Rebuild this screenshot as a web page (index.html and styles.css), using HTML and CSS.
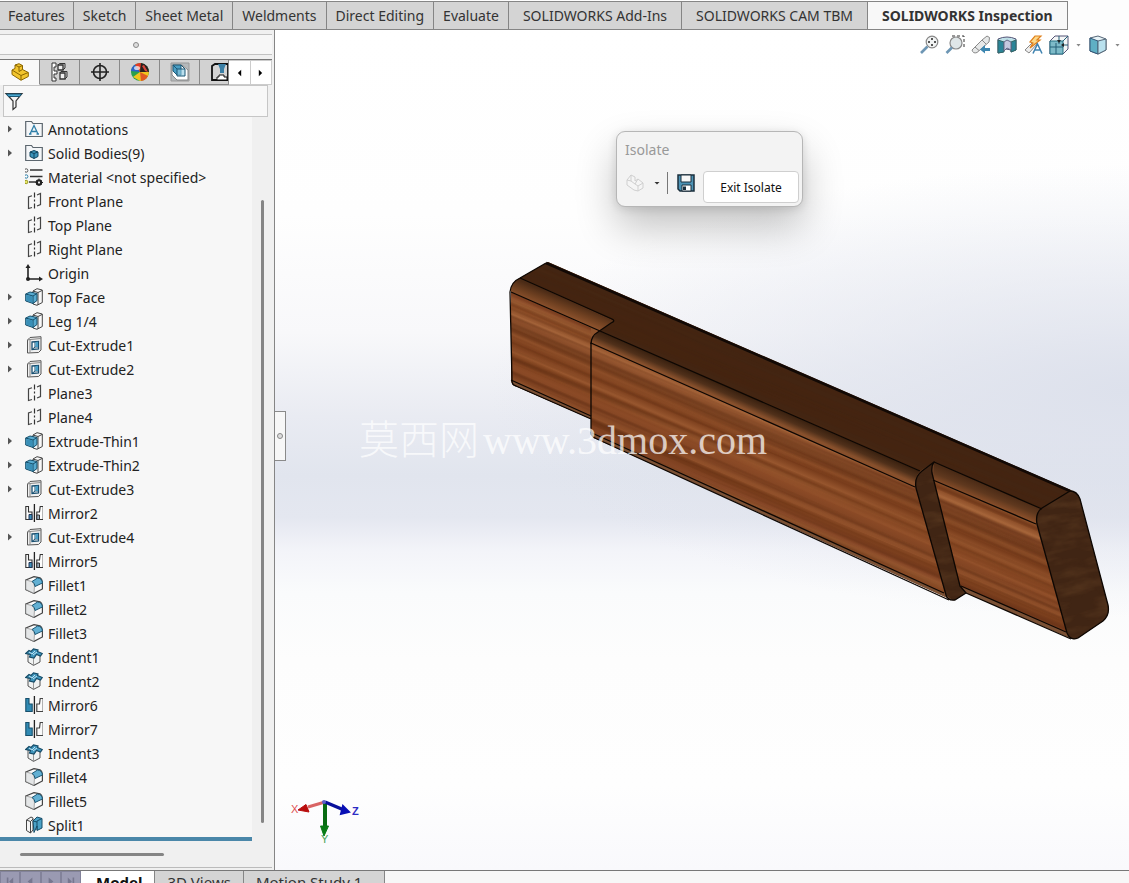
FILE: index.html
```html
<!DOCTYPE html>
<html lang="en">
<head>
<meta charset="utf-8">
<title>SOLIDWORKS</title>
<link rel="stylesheet" href="styles.css">
</head>
<body>
<svg class="defs" aria-hidden="true">
  <symbol id="arrow" viewBox="0 0 6 8"><path d="M1 0.5 5 4 1 7.5Z" fill="#555"/></symbol>
  <symbol id="annot" viewBox="0 0 18 18"><path d="M.7 16.500V1.500H6.500L8 3.500H17.300V16.500Z" fill="#f4f6f8" stroke="#5c666e" stroke-width="1.200"/><path d="M5 14 9 5.500 13 14M6.500 11.500H11.500M4 14H6.500M11.500 14H14" fill="none" stroke="#2f7fa8" stroke-width="1.300"/></symbol>
  <symbol id="bodies" viewBox="0 0 18 18"><path d="M.7 16.500V1.500H6.500L8 3.500H17.300V16.500Z" fill="#f4f6f8" stroke="#5c666e" stroke-width="1.200"/><path d="M5 8 9 6.500 13 8V12.500L9 14.500 5 12.500Z" fill="#3c94bb" stroke="#12455f"/><path d="M5 8 9 9.500 13 8M9 9.500V14.500" stroke="#12455f" fill="none"/></symbol>
  <symbol id="material" viewBox="0 0 18 18"><g fill="#fff" stroke-width="1"><circle cx="1.200" cy="2.500" r="1.700" stroke="#555"/><circle cx="1.200" cy="8.500" r="1.700" stroke="#2f7fa8"/><circle cx="1.200" cy="14" r="1.700" stroke="#9a9a20" fill="#e7e76a"/></g><path d="M5 2H17.500M5 8.500H17.500M4 14H11" stroke="#333" stroke-width="1.600"/><circle cx="14" cy="14.500" r="2.200" fill="none" stroke="#222" stroke-width="2"/><path d="M14 10.500V18M10.500 14.500H18M11.500 12 16.500 17M16.500 12 11.500 17" stroke="#222" stroke-width="1"/><circle cx="14" cy="14.500" r="1" fill="#fff"/></symbol>
  <symbol id="plane" viewBox="0 0 18 18"><path d="M7 3.800 3.500 5V16.500L7 15.500M12 3 15.500 1.500V12.500L12 14" fill="none" stroke="#444" stroke-width="1.200"/><path d="M9.500 .5V17.500" stroke="#333" stroke-width="1.200" stroke-dasharray="5 2 2 2"/></symbol>
  <symbol id="origin" viewBox="0 0 18 18"><path d="M3 4V15H14" fill="none" stroke="#222" stroke-width="1.600"/><path d="M.5 4 3 0 5.500 4ZM14 12.500 18 15 14 17.500Z" fill="#222"/><circle cx="3" cy="15" r="2" fill="#222"/></symbol>
  <symbol id="extrude" viewBox="0 0 18 18"><path d="M8 3 12 .7 17.300 2V14.500L12 17.300 8 16Z" fill="#f8f8f8" stroke="#444"/><path d="M13 4.500 17 2.500M13 4.500V17M8 3 13 4.500" stroke="#444" fill="none"/><path d="M.7 6 5 4 12 5.500V12.500L8 15.500.7 13Z" fill="#58abd0" stroke="#174f6b"/><path d="M.7 6 8 8 12 5.500M8 8V15.500" stroke="#174f6b" fill="none"/><path d="M1.500 7 7.500 8.500V14.500L1.500 12.500Z" fill="#398fb7"/></symbol>
  <symbol id="cut" viewBox="0 0 18 18"><path d="M2.500 4 5 1.500 16 .7V14L13.500 16.500 2.500 17Z" fill="#f0f0f0" stroke="#555"/><path d="M2.500 4 5 3.500 16 2.500M5 3.500V17" fill="none" stroke="#888"/><path d="M7 6 13.500 5.500V13L7 13.500Z" fill="#fff" stroke="#184f70" stroke-width="1.300"/><path d="M10 6V11L7 13.500M10 11H13" fill="none" stroke="#184f70"/><path d="M10.500 6 13 5.800V11H10.500Z" fill="#4aa0c8"/></symbol>
  <symbol id="mirror" viewBox="0 0 18 18"><path d="M.8 15.500V2.500H3.500V8H7V15.500ZM18.200 15.500V2.500H15.200L14.500 8H11.800V15.500Z" fill="#fdfdfd" stroke="#333" stroke-width="1.100"/><path d="M4 10.500H7V15.500H4Z" fill="#3c8fb8" stroke="#235"/><path d="M11.800 11H14.500V15.500H11.800Z" fill="#9ab" stroke="#333"/><path d="M9.400 0V18" stroke="#222" stroke-width="1.300"/></symbol>
  <symbol id="mirrorbody" viewBox="0 0 18 18"><path d="M.8 15.500V2.500H4V8H7.200V15.500Z" fill="#318ab3" stroke="#174f6b" stroke-width="1.100"/><path d="M18.200 15.500V2.500H15.200L14.500 8H11.800V15.500Z" fill="#fafafa" stroke="#444" stroke-width="1.200"/><path d="M9.400 0V18" stroke="#222" stroke-width="1.300"/></symbol>
  <symbol id="fillet" viewBox="0 0 18 18"><path d="M.8 4 9 .6 15 1.800Q17 3 17.400 6V13L9 17.400.8 13.500Z" fill="#fbfbfb" stroke="#444" stroke-width="1.200"/><path d="M.8 4 7 5.500Q9 7 9.500 10L9 17.400.8 13.500Z" fill="#e4e6e7" stroke="#777" stroke-width=".6"/><path d="M7 5.500 12.500 2Q17.300 2.500 17.400 7L10 10.500Q10 7 7 5.500Z" fill="#62b0d3" stroke="#1b5775"/></symbol>
  <symbol id="indent" viewBox="0 0 18 18"><path d="M3 6V14L8.500 17.400 15 14V6Z" fill="#f0f2f2" stroke="#555"/><path d="M8.500 9V17" stroke="#999"/><path d="M.7 5.500 4 2.500 6 3.500 8.500 .8 13 2 12.500 3.500 17.300 5.500 15.500 8 11.500 6.500 9 10 4.500 9 5.500 6.500Z" fill="#3f94bb" stroke="#164c68" stroke-width="1.200"/><path d="M4 4 7 6 10 3M8 7 12 4" fill="none" stroke="#bfe3f2"/></symbol>
  <symbol id="split" viewBox="0 0 18 18"><path d="M1.500 4 6 1 8 2V14L5.500 17 1.500 14.500Z" fill="#f4f4f4" stroke="#444"/><path d="M5.500 5.500V17M1.500 4 5.500 5.500 8 3" fill="none" stroke="#444"/><path d="M8 5 12 1 17 2.500V12L12 14.500V10L9 16.500Z" fill="#4ba1c6" stroke="#164c68"/><path d="M12 5 17 2.500M12 5V14M8 5 12 6" fill="none" stroke="#164c68"/></symbol>
  <symbol id="part" viewBox="0 0 18 18"><path d="M1 7 4 5.500V2L8 .7 11.500 2.500V6.500L17.300 9.500V13.500L10 17.300 1 11.500Z" fill="currentColor" stroke="#8a6500"/><path d="M1 7 10 12.500 17.300 9.500M10 12.500V17M4 2 8 4 11.500 2.500M8 4V8.500L11.500 6.500" fill="none" stroke="#8a6500"/></symbol>
</svg>
<div class="app">
  <nav class="ribbon" aria-label="Command tabs">
    <button class="rtab">Features</button><button class="rtab">Sketch</button><button class="rtab">Sheet Metal</button><button class="rtab">Weldments</button><button class="rtab">Direct Editing</button><button class="rtab">Evaluate</button><button class="rtab wide">SOLIDWORKS Add-Ins</button><button class="rtab wide">SOLIDWORKS CAM TBM</button><button class="rtab wide current">SOLIDWORKS Inspection</button>
  </nav>
  <main class="work">
    <aside class="panel">
      <div class="grip"><span class="dot"></span></div>
      <div class="managers">
        <button class="mtab current" aria-label="Feature tree"><svg class="i20 gold"><use href="#part"/></svg></button>
        <button class="mtab" aria-label="Properties"><svg class="i20" viewBox="0 0 20 20"><path d="M6 1H2V19H6V16H4V12H7V9H4V5H6Z" fill="#fff" stroke="#333"/><path d="M8 3H13V8H8ZM10 11H15V17H10Z" fill="#eee" stroke="#333" stroke-width="1.300"/><path d="M8 3 9.500 1.500H15V6L13 8M10 11 11 9.500H17V15L15 17" fill="none" stroke="#333"/></svg></button>
        <button class="mtab" aria-label="Dimensions"><svg class="i20" viewBox="0 0 20 20"><circle cx="10" cy="10" r="6.500" fill="none" stroke="#222" stroke-width="1.600"/><path d="M10 1V19M1 10H19" stroke="#222" stroke-width="1.600"/></svg></button>
        <button class="mtab" aria-label="Appearances"><svg class="i20" viewBox="0 0 20 20"><circle cx="10" cy="10" r="9" fill="#29a04e"/><path d="M10 10 1 9A9 9 0 0 1 5 2.500Z" fill="#2c62c8"/><path d="M10 10 5 2.500A9 9 0 0 1 12 1.200Z" fill="#e33b27"/><path d="M10 10 11 1A9 9 0 0 1 19 11Z" fill="#27211f"/><path d="M14 3 18 10 15 9 12 4Z" fill="#d8453a"/><path d="M10 10 19 10A9 9 0 0 1 10 19L3 15Z" fill="#f0c51e"/><path d="M10 10 18 14A9 9 0 0 1 11 19Z" fill="#e05a24"/><ellipse cx="7" cy="6" rx="3" ry="2" fill="#fff" opacity=".7"/></svg></button>
        <button class="mtab" aria-label="CAM tree"><svg class="i20" viewBox="0 0 20 20"><path d="M1 1H19V19H1Z" fill="#b5b9bb" stroke="#999"/><path d="M2 3H12L18 8V18H7L2 13Z" fill="#fff" stroke="#888"/><path d="M3 3H11V13H7L3 9Z" fill="#4a9ec3" stroke="#1b5775"/><path d="M7 7H15V14H7ZM3 3 7 7M11 3 15 7" fill="#8fcbe2" fill-opacity=".6" stroke="#1b5775"/></svg></button>
        <button class="mtab cut" aria-label="CAM operations"><svg class="i20" viewBox="0 0 20 20"><path d="M3 18V4L6 2H19V18Z" fill="#d3d3d3" stroke="#111" stroke-width="1.800"/><path d="M9 2H17L15 7V11H11V7Z" fill="#3a7fa5"/><path d="M8 18V15H10V13H15V15H18V18Z" fill="#fff" stroke="#111"/></svg></button>
        <button class="step" aria-label="Previous tabs"><svg class="tri" viewBox="0 0 6 8"><path d="M5 0V8L1 4Z"/></svg></button>
        <button class="step" aria-label="More tabs"><svg class="tri" viewBox="0 0 6 8"><path d="M1 0V8L5 4Z"/></svg></button>
      </div>
      <label class="filter"><svg class="i20" viewBox="0 0 20 20"><path d="M2 2.500H18L12 10V16L9 18.500V10Z" fill="#f5f5f5" stroke="#333" stroke-width="1.200"/><path d="M2.500 3H17.500L15.500 5.500H4.500Z" fill="#4ba8d0" stroke="#1b5775"/></svg><input type="text" aria-label="Filter tree"></label>
      <div class="treebox">
        <ul class="tree">
          <li><button aria-label="Expand"><svg><use href="#arrow"/></svg></button><svg class="ic"><use href="#annot"/></svg><span>Annotations</span></li>
          <li><button aria-label="Expand"><svg><use href="#arrow"/></svg></button><svg class="ic"><use href="#bodies"/></svg><span>Solid Bodies(9)</span></li>
          <li><svg class="ic"><use href="#material"/></svg><span>Material &lt;not specified&gt;</span></li>
          <li><svg class="ic"><use href="#plane"/></svg><span>Front Plane</span></li>
          <li><svg class="ic"><use href="#plane"/></svg><span>Top Plane</span></li>
          <li><svg class="ic"><use href="#plane"/></svg><span>Right Plane</span></li>
          <li><svg class="ic"><use href="#origin"/></svg><span>Origin</span></li>
          <li><button aria-label="Expand"><svg><use href="#arrow"/></svg></button><svg class="ic"><use href="#extrude"/></svg><span>Top Face</span></li>
          <li><button aria-label="Expand"><svg><use href="#arrow"/></svg></button><svg class="ic"><use href="#extrude"/></svg><span>Leg 1/4</span></li>
          <li><button aria-label="Expand"><svg><use href="#arrow"/></svg></button><svg class="ic"><use href="#cut"/></svg><span>Cut-Extrude1</span></li>
          <li><button aria-label="Expand"><svg><use href="#arrow"/></svg></button><svg class="ic"><use href="#cut"/></svg><span>Cut-Extrude2</span></li>
          <li><svg class="ic"><use href="#plane"/></svg><span>Plane3</span></li>
          <li><svg class="ic"><use href="#plane"/></svg><span>Plane4</span></li>
          <li><button aria-label="Expand"><svg><use href="#arrow"/></svg></button><svg class="ic"><use href="#extrude"/></svg><span>Extrude-Thin1</span></li>
          <li><button aria-label="Expand"><svg><use href="#arrow"/></svg></button><svg class="ic"><use href="#extrude"/></svg><span>Extrude-Thin2</span></li>
          <li><button aria-label="Expand"><svg><use href="#arrow"/></svg></button><svg class="ic"><use href="#cut"/></svg><span>Cut-Extrude3</span></li>
          <li><svg class="ic"><use href="#mirror"/></svg><span>Mirror2</span></li>
          <li><button aria-label="Expand"><svg><use href="#arrow"/></svg></button><svg class="ic"><use href="#cut"/></svg><span>Cut-Extrude4</span></li>
          <li><svg class="ic"><use href="#mirror"/></svg><span>Mirror5</span></li>
          <li><svg class="ic"><use href="#fillet"/></svg><span>Fillet1</span></li>
          <li><svg class="ic"><use href="#fillet"/></svg><span>Fillet2</span></li>
          <li><svg class="ic"><use href="#fillet"/></svg><span>Fillet3</span></li>
          <li><svg class="ic"><use href="#indent"/></svg><span>Indent1</span></li>
          <li><svg class="ic"><use href="#indent"/></svg><span>Indent2</span></li>
          <li><svg class="ic"><use href="#mirrorbody"/></svg><span>Mirror6</span></li>
          <li><svg class="ic"><use href="#mirrorbody"/></svg><span>Mirror7</span></li>
          <li><svg class="ic"><use href="#indent"/></svg><span>Indent3</span></li>
          <li><svg class="ic"><use href="#fillet"/></svg><span>Fillet4</span></li>
          <li><svg class="ic"><use href="#fillet"/></svg><span>Fillet5</span></li>
          <li><svg class="ic"><use href="#split"/></svg><span>Split1</span></li>
        </ul>
        <div class="vscroll"><div class="vthumb"></div></div>
      </div>
      <div class="hscroll"><div class="hthumb"></div></div>
    </aside>
    <section class="view">
      <svg class="model" viewBox="275 30 854 840" preserveAspectRatio="xMinYMin meet" role="img" aria-label="Wooden beam model">
        <defs>
          <linearGradient id="grain" gradientUnits="userSpaceOnUse" x1="0" y1="0" x2="0" y2="94" spreadMethod="repeat">
            <stop offset="0" stop-color="#7f4322"/><stop offset=".06" stop-color="#90502a"/><stop offset=".1" stop-color="#783d1b"/><stop offset=".2" stop-color="#854626"/><stop offset=".26" stop-color="#9c5d33"/><stop offset=".3" stop-color="#834521"/><stop offset=".38" stop-color="#a26238"/><stop offset=".43" stop-color="#874a28"/><stop offset=".52" stop-color="#6f391b"/><stop offset=".58" stop-color="#8d4e28"/><stop offset=".66" stop-color="#783c1b"/><stop offset=".75" stop-color="#97562e"/><stop offset=".8" stop-color="#7d401d"/><stop offset=".9" stop-color="#8b4a26"/><stop offset="1" stop-color="#7f4322"/>
          </linearGradient>
          <linearGradient id="round" gradientUnits="userSpaceOnUse" x1="760" y1="401" x2="753" y2="417"><stop offset="0" stop-color="#38200f"/><stop offset=".4" stop-color="#50301a"/><stop offset=".75" stop-color="#87502c"/><stop offset="1" stop-color="#8a4f2b"/></linearGradient>
          <linearGradient id="roundleft" gradientUnits="userSpaceOnUse" x1="566" y1="299" x2="560" y2="314"><stop offset="0" stop-color="#4b2b16"/><stop offset=".5" stop-color="#6d3f20"/><stop offset="1" stop-color="#8e532d"/></linearGradient>
          <linearGradient id="roundright" gradientUnits="userSpaceOnUse" x1="988" y1="486" x2="982" y2="501"><stop offset="0" stop-color="#4b2b16"/><stop offset=".5" stop-color="#5f381e"/><stop offset="1" stop-color="#8a4f2a"/></linearGradient>
          <filter id="fibre" x="0" y="0" width="100%" height="100%" color-interpolation-filters="sRGB"><feTurbulence type="fractalNoise" baseFrequency=".0015 .16" numOctaves="2" seed="7"/><feColorMatrix values="0 0 0 0 .32  0 0 0 0 .14  0 0 0 0 .05  2 0 0 0 -.9"/></filter>
          <filter id="light" x="0" y="0" width="100%" height="100%" color-interpolation-filters="sRGB"><feTurbulence type="fractalNoise" baseFrequency=".0015 .1" numOctaves="2" seed="21"/><feColorMatrix values="0 0 0 0 .76  0 0 0 0 .49  0 0 0 0 .29  2 0 0 0 -1"/></filter>
          <filter id="endfibre" x="0" y="0" width="100%" height="100%" color-interpolation-filters="sRGB"><feTurbulence type="fractalNoise" baseFrequency=".03 .1" numOctaves="4" seed="4"/><feColorMatrix values="0 0 0 0 .42  0 0 0 0 .28  0 0 0 0 .16  1.600 0 0 0 -.65"/></filter>
          <clipPath id="front"><path d="M511 292 591 327V419L513 385 511 381ZM591 343 915 487 952 600 594 437 591 433ZM933 480 1036 524 1068 637 960 590Z"/></clipPath>
          <clipPath id="top"><path d="M520 278 548 262 1073 491 1042 509 934 462 920 471 600 331 614 321Z"/></clipPath>
          <clipPath id="ends"><path id="endshape" d="M1070 491Q1077 491 1080 499L1108 605Q1110 615 1103 621L1078 638Q1070 641 1067 633L1037 524Q1035 513 1042 508Z"/><path id="bandshape" d="M934 462Q931 466 932 473L960 586 966 593 955 600Q948 601 946 595L916 488Q914 477 922 471Z"/></clipPath>
        </defs>
        <path d="M548 262 1070 491Q1077 491 1080 499L1108 605Q1110 615 1103 621L1078 638Q1073 641 1066 636L966 593 955 600 594 438 591 433V419L513 385 511 381V288Q512 282 520 278Z" fill="#6f4125"/>
        <g clip-path="url(#front)"><g transform="translate(500 270) rotate(23)"><rect x="-80" y="-280" width="850" height="560" fill="url(#grain)"/><rect x="-80" y="-280" width="850" height="560" filter="url(#fibre)" opacity=".8"/><rect x="-80" y="-280" width="850" height="560" filter="url(#light)" opacity=".5"/></g></g>
        <g clip-path="url(#top)"><path d="M500 250H1100V520H500Z" fill="#432512"/><g transform="translate(500 250) rotate(23)"><rect x="-20" y="-80" width="700" height="180" filter="url(#fibre)" opacity=".3"/><rect x="-20" y="-80" width="700" height="180" filter="url(#light)" opacity=".08"/></g></g>
        <path d="M600 331 920 471Q914 478 915 487L591 343Q592 335 600 331Z" fill="url(#round)"/>
        <path d="M520 278 614 321 598 331 591 340V328L511 292Q510 283 520 278Z" fill="url(#roundleft)"/>
        <path d="M934 462 1042 509Q1036 514 1036 524L933 480Z" fill="url(#roundright)"/>
        <g clip-path="url(#ends)"><path d="M900 450H1120V650H900Z" fill="#402514"/><g transform="translate(900 450) rotate(-10)"><rect x="-120" y="-50" width="350" height="350" filter="url(#endfibre)" opacity=".6"/></g></g>
        <path d="M511 380 591 416V419L513 385ZM593 433 944 593 952 600 594 438ZM961 586 1066 632 1070 638 966 593Z" fill="#7b5135"/>
        <g fill="none" stroke="#0d0703" stroke-width="1.300" stroke-linejoin="round">
          <path d="M511 292 600 331M511 380 591 416M592 433 944 593M961 586 1066 632M520 278 612 319Q616 321 611 323L598 332Q591 336 591 344M600 331 920 471M591 343 915 487M934 462 1042 509M933 480 1036 524"/>
          <path d="M546 263 520 278Q511 282 510 292L512 381Q512 385 516 386L591 419V343V432Q591 437 597 439L949 600M966 593 1071 639"/>
          <use href="#endshape"/><use href="#bandshape"/>
        </g>
        <path d="M546 263 1070 491" stroke="#120905" stroke-width="2.600"/>
        <g class="triad"><path d="M325 802 308 807" stroke="#d96464" stroke-width="3"/><path d="M298 810 306 804.500 309 812Z" fill="#b90d0d" stroke="#b90d0d"/><path d="M325 803V827" stroke="#086b12" stroke-width="4"/><path d="M320.500 826H328.500L324 836Z" fill="#087b14" stroke="#087b14"/><path d="M325 802 344 810" stroke="#080f9b" stroke-width="3.500"/><path d="M343 806 349 812 341 814Z" fill="#080fb5" stroke="#080fb5" stroke-width="2"/><circle cx="324" cy="802" r="2" fill="#5d61c6"/><text x="291" y="813" fill="#e05252">X</text><text x="321" y="843" fill="#4aa353">Y</text><text x="352" y="815" fill="#2c2cc4" font-weight="700">Z</text></g>
      </svg>
      <div class="watermark"><span>莫西网</span><span>www.3dmox.com</span></div>
      <div class="headsup">
        <button aria-label="Zoom to fit"><svg viewBox="0 0 20 20"><circle cx="13" cy="7" r="5.800" fill="#f1f3f3" stroke="#888" stroke-width="1.200"/><path d="M13 3V5M13 9V11M9 7H11M15 7H17" stroke="#222" stroke-width="1.500"/><path d="M8.500 11.500 2 18" stroke="#6d96b4" stroke-width="2.600"/></svg></button>
        <button aria-label="Zoom to area"><svg viewBox="0 0 20 20"><path d="M7 1H19V14" fill="none" stroke="#333" stroke-dasharray="3 2"/><circle cx="11" cy="8" r="6" fill="#dfe6e8" stroke="#888" stroke-width="1.200"/><path d="M7 12.500 1.500 18" stroke="#6d96b4" stroke-width="2.600"/></svg></button>
        <button aria-label="Previous view"><svg viewBox="0 0 20 20"><path d="M1 15 11 5 16 1 18.500 2.500 18 7 6 17.500Q2 19 1 15Z" fill="#e6e8e8" stroke="#888"/><path d="M4 12 8 15.500M11 5 15 9" stroke="#888"/><path d="M9 14.500 14 10V13H19V16H14V18.500Z" fill="#3c86b0"/></svg></button>
        <button aria-label="Section view"><svg viewBox="0 0 20 20"><path d="M1 4Q10 0 19 4V15L14 17V15L9 14 6 17 1 18Z" fill="#bfe0e8" stroke="#557"/><path d="M1 5 7 7V17L1 18ZM14 7 19 5V15L14 17Z" fill="#2b8498" stroke="#366"/><path d="M7 7 10 5 14 7V15L10 13 7 16Z" fill="#c6c8df" stroke="#668"/></svg></button>
        <button aria-label="Annotation view"><svg viewBox="0 0 20 20"><path d="M2 15 11 6 14 9 6 18Z" fill="#eee" stroke="#888"/><path d="M7 7 12 1H18L14 5H17L7 13 10 8Z" fill="#fbd98a" stroke="#e0801c" stroke-width="1.200"/><path d="M10 18.500 14.500 9 19 18.500M11.500 15H17.500" fill="none" stroke="#3e82b0" stroke-width="1.500"/></svg></button>
        <button aria-label="View orientation"><svg viewBox="0 0 20 20"><path d="M1 6 6 1H19V14L14 19H1Z" fill="#f4f6f6" stroke="#557"/><path d="M1 6H14V19H1Z" fill="#7dbac8" stroke="#257083"/><path d="M14 6 19 1M10 1V9M13 10H19M7 8V19M1 12H14" fill="none" stroke="#245f77"/><path d="M8 5H12L10 8ZM12 10 15 8V12Z" fill="#222"/></svg></button><span class="caret"></span>
        <button aria-label="Display style"><svg viewBox="0 0 20 20"><path d="M2 3 10 1 18 4V15L10 19 2 16Z" fill="#e8f4f8" stroke="#567"/><path d="M2 3 10 6V19L2 16Z" fill="#5fafc4" stroke="#357"/><path d="M10 6 18 4V15L10 19Z" fill="#b9e1ee" stroke="#567"/></svg></button><span class="caret"></span>
      </div>
      <div class="dialog" role="dialog" aria-label="Isolate">
        <div class="dtitle">Isolate</div>
        <div class="dbody"><div class="tools"><button class="ghost" aria-label="Visibility"><svg viewBox="0 0 18 18"><path d="M1 6 5 1 9 3V7L12 5 17 9V14L12 17 8 16 1 11Z" fill="#f5f5f5" stroke="#cfcfcf"/><path d="M5 1V7L9 10 12 5M9 10 12 12 17 9M12 12V17M1 6 5 7" fill="none" stroke="#cfcfcf"/></svg></button><span class="caret dark"></span><i class="rule"></i><button class="ghost" aria-label="Save"><svg viewBox="0 0 18 18"><path d="M1 1H17V17H3L1 15Z" fill="#4d93b5" stroke="#1b2f3c" stroke-width="1.500"/><path d="M4 1H14V8H4Z" fill="#f7f7f7" stroke="#1b2f3c"/><path d="M5 11H14V17H5Z" fill="#fff" stroke="#1b2f3c"/><path d="M6 12.500H9V16H6Z" fill="#1b2f3c"/></svg></button></div><button class="exit">Exit Isolate</button></div>
      </div>
      <button class="handle" aria-label="Collapse panel"><span class="dot"></span></button>
    </section>
  </main>
  <footer class="sheets">
    <div class="nav">
      <button aria-label="First"><svg viewBox="0 0 10 10"><path d="M1 0H3V10H1ZM9 0V10L4 5Z"/></svg></button>
      <button aria-label="Previous"><svg viewBox="0 0 10 10"><path d="M8 0V10L2 5Z"/></svg></button>
      <button aria-label="Next"><svg viewBox="0 0 10 10"><path d="M2 0V10L8 5Z"/></svg></button>
      <button aria-label="Last"><svg viewBox="0 0 10 10"><path d="M7 0H9V10H7ZM1 0V10L6 5Z"/></svg></button>
    </div>
    <button class="stab current">Model</button><button class="stab">3D Views</button><button class="stab last">Motion Study 1</button>
  </footer>
</div>
</body>
</html>
```
FILE: styles.css
```css
* { box-sizing: border-box; }
body { margin: 0; overflow: hidden; font-family: "Noto Sans", "Open Sans", sans-serif; font-size: 14px; color: #222; }
button { margin: 0; padding: 0; border: 0; background: none; color: inherit; font: inherit; }
svg { display: block; overflow: visible; flex: none; }
.defs { position: absolute; width: 0; height: 0; }
.app { display: flex; flex-direction: column; height: 100vh; background: #f7f7f7; }

.ribbon { display: flex; flex: none; height: 30px; padding-top: 1px; background: #fdfdfd; }
.rtab { padding: 0 9px; border: solid #858585; border-width: 1px 1px 1px 0; background: #d4d4d4; color: #333; white-space: nowrap; line-height: 26px; }
.rtab:first-child { padding: 0 8px; }
.rtab.wide { padding: 0 14px; }
.rtab.current { background: #f8f8f8; font-weight: 700; }

.work { display: flex; flex: 1; min-height: 0; }
.panel { display: flex; flex-direction: column; flex: none; width: 275px; padding: 4px 2px 0 0; border-right: 1px solid #858585; background: #f0f0f0; }
.dot { display: block; width: 6px; height: 6px; border: 1px solid #888; border-radius: 50%; background: #ddd; }
.grip { display: flex; flex: none; align-items: center; justify-content: center; height: 21px; border: solid #c2c2c2; border-width: 1px 0; background: #f7f7f7; }
.managers { display: flex; flex: none; height: 26px; margin-top: 4px; border-top: 1px solid #777; background: #f7f7f7; }
.mtab { display: flex; flex: none; align-items: center; justify-content: center; width: 40px; border: solid #8a8a8a; border-width: 0 1px 1px 0; background: #d2d2d2; }
.mtab.current { border-bottom-color: transparent; background: #f9f9f9; }
.mtab.cut { width: 29px; justify-content: flex-start; padding-left: 9px; overflow: hidden; }
.i20 { width: 20px; height: 20px; }
.gold { width: 18px; height: 18px; color: #f2c52e; }
.step { display: flex; flex: 1; align-items: center; justify-content: center; border: solid #ccc; border-width: 1px 1px 1px 0; background: #fff; }
.tri { width: 5px; height: 8px; }
.filter { display: flex; flex: none; align-items: center; height: 32px; margin: 0 4px 0 3px; border: 1px solid #c6c6c6; background: #f8f8f8; }
.filter input { flex: 1; min-width: 0; height: 28px; border: 0; background: none; }
.treebox { display: flex; flex: 1; min-height: 0; }
.tree { flex: 1; margin: 0 0 auto; padding: 0; border-bottom: 4px solid #4a87a9; background: #f7f7f7; list-style: none; }
.tree li { display: grid; grid-template-columns: 18px 18px 1fr; column-gap: 5px; align-items: center; height: 24px; padding-left: 2px; white-space: nowrap; }
.tree button { grid-column: 1; padding-left: 5px; }
.tree button svg { width: 6px; height: 8px; }
.tree .ic { grid-column: 2; width: 18px; height: 18px; }
.tree span { grid-column: 3; }
.vscroll { width: 20px; padding: 83px 0 17px; }
.vthumb { width: 3px; height: 100%; margin-left: 9px; border-radius: 2px; background: #858585; }
.hscroll { flex: none; height: 28px; padding: 13px 20px 0; border-bottom: 1px solid #bbb; margin-bottom: 2px; }
.hthumb { width: 144px; height: 3px; border-radius: 2px; background: #858585; }

.view { position: relative; flex: 1; min-width: 0; overflow: hidden; background: radial-gradient(ellipse 75% 27% at 100% 43%, #dde1ec, #dde1ec00), linear-gradient(#ffffff 0%, #fefefe 22%, #f8f8fa 36%, #e9ebf2 46%, #e1e5ee 53%, #e4e7f0 58%, #f3f4f9 62%, #fafbfc 67%, #fdfdfd 75%, #fefefe 90%, #f9f9fc 100%); }
.model { width: 100%; height: auto; }
.triad text { font-family: "Liberation Sans", sans-serif; font-size: 11px; }
.watermark { position: absolute; left: 84px; top: 386px; display: flex; gap: 4px; font: 40px/50px "Liberation Serif", "Noto Sans CJK SC", serif; font-weight: 300; color: #ffffffb8; }
.headsup { position: absolute; top: 5px; right: 8px; display: flex; align-items: center; gap: 6px; }
.headsup svg { width: 20px; height: 20px; }
.headsup .caret { margin: 0 1px; }
.caret { width: 5px; height: 3px; background: #888; clip-path: polygon(0 0, 100% 0, 50% 100%); }
.caret.dark { width: 6px; background: #333; }
.dialog { position: absolute; left: 341px; top: 101px; width: 187px; padding: 7px 3px 3px; border: 1px solid #b6b6b6; border-radius: 9px; background: #f3f3f3; box-shadow: 0 20px 40px #0000003d, 0 2px 10px #0000001f; }
.dtitle { padding-left: 5px; line-height: 22px; color: #999; }
.dbody { display: flex; align-items: flex-start; height: 32px; margin-top: 10px; }
.tools { display: flex; align-items: center; height: 24px; }
.ghost svg { width: 18px; height: 18px; }
.ghost { margin-left: 6px; }
.tools .caret { margin-left: 10px; }
.rule { width: 1px; height: 22px; margin: 0 3px 0 7px; background: #777; }
.exit { flex: 1; height: 32px; margin-left: 8px; border: 1px solid #cfcfcf; border-radius: 4px; background: #fff; color: #111; font-size: 12px; }
.handle { position: absolute; left: 0; top: 381px; display: flex; align-items: center; justify-content: center; width: 11px; height: 50px; border: 1px solid #8a8a8a; border-left: 0; background: #f7f7f7; }

.sheets { display: flex; flex: none; height: 13px; overflow: hidden; border-top: 1px solid #777; background: #f7f7f7; align-items: flex-start; }
.nav { display: flex; width: 81px; height: 20px; background: #9a9ab2; }
.nav button { display: flex; flex: 1; align-items: center; justify-content: center; border: 1px solid #82829a; }
.nav svg { width: 8px; height: 9px; fill: #77778f; }
.stab { height: 22px; padding: 0 12px; border-right: 1px solid #858585; background: #d4d4d4; color: #333; line-height: 20px; font-size: 14px; }
.stab.current { padding: 0 12px 0 15px; background: #fff; color: #111; font-weight: 700; font-size: 15px; }
.stab:nth-child(n+3) { font-size: 15px; }
.stab.last { padding-right: 22px; }
```
